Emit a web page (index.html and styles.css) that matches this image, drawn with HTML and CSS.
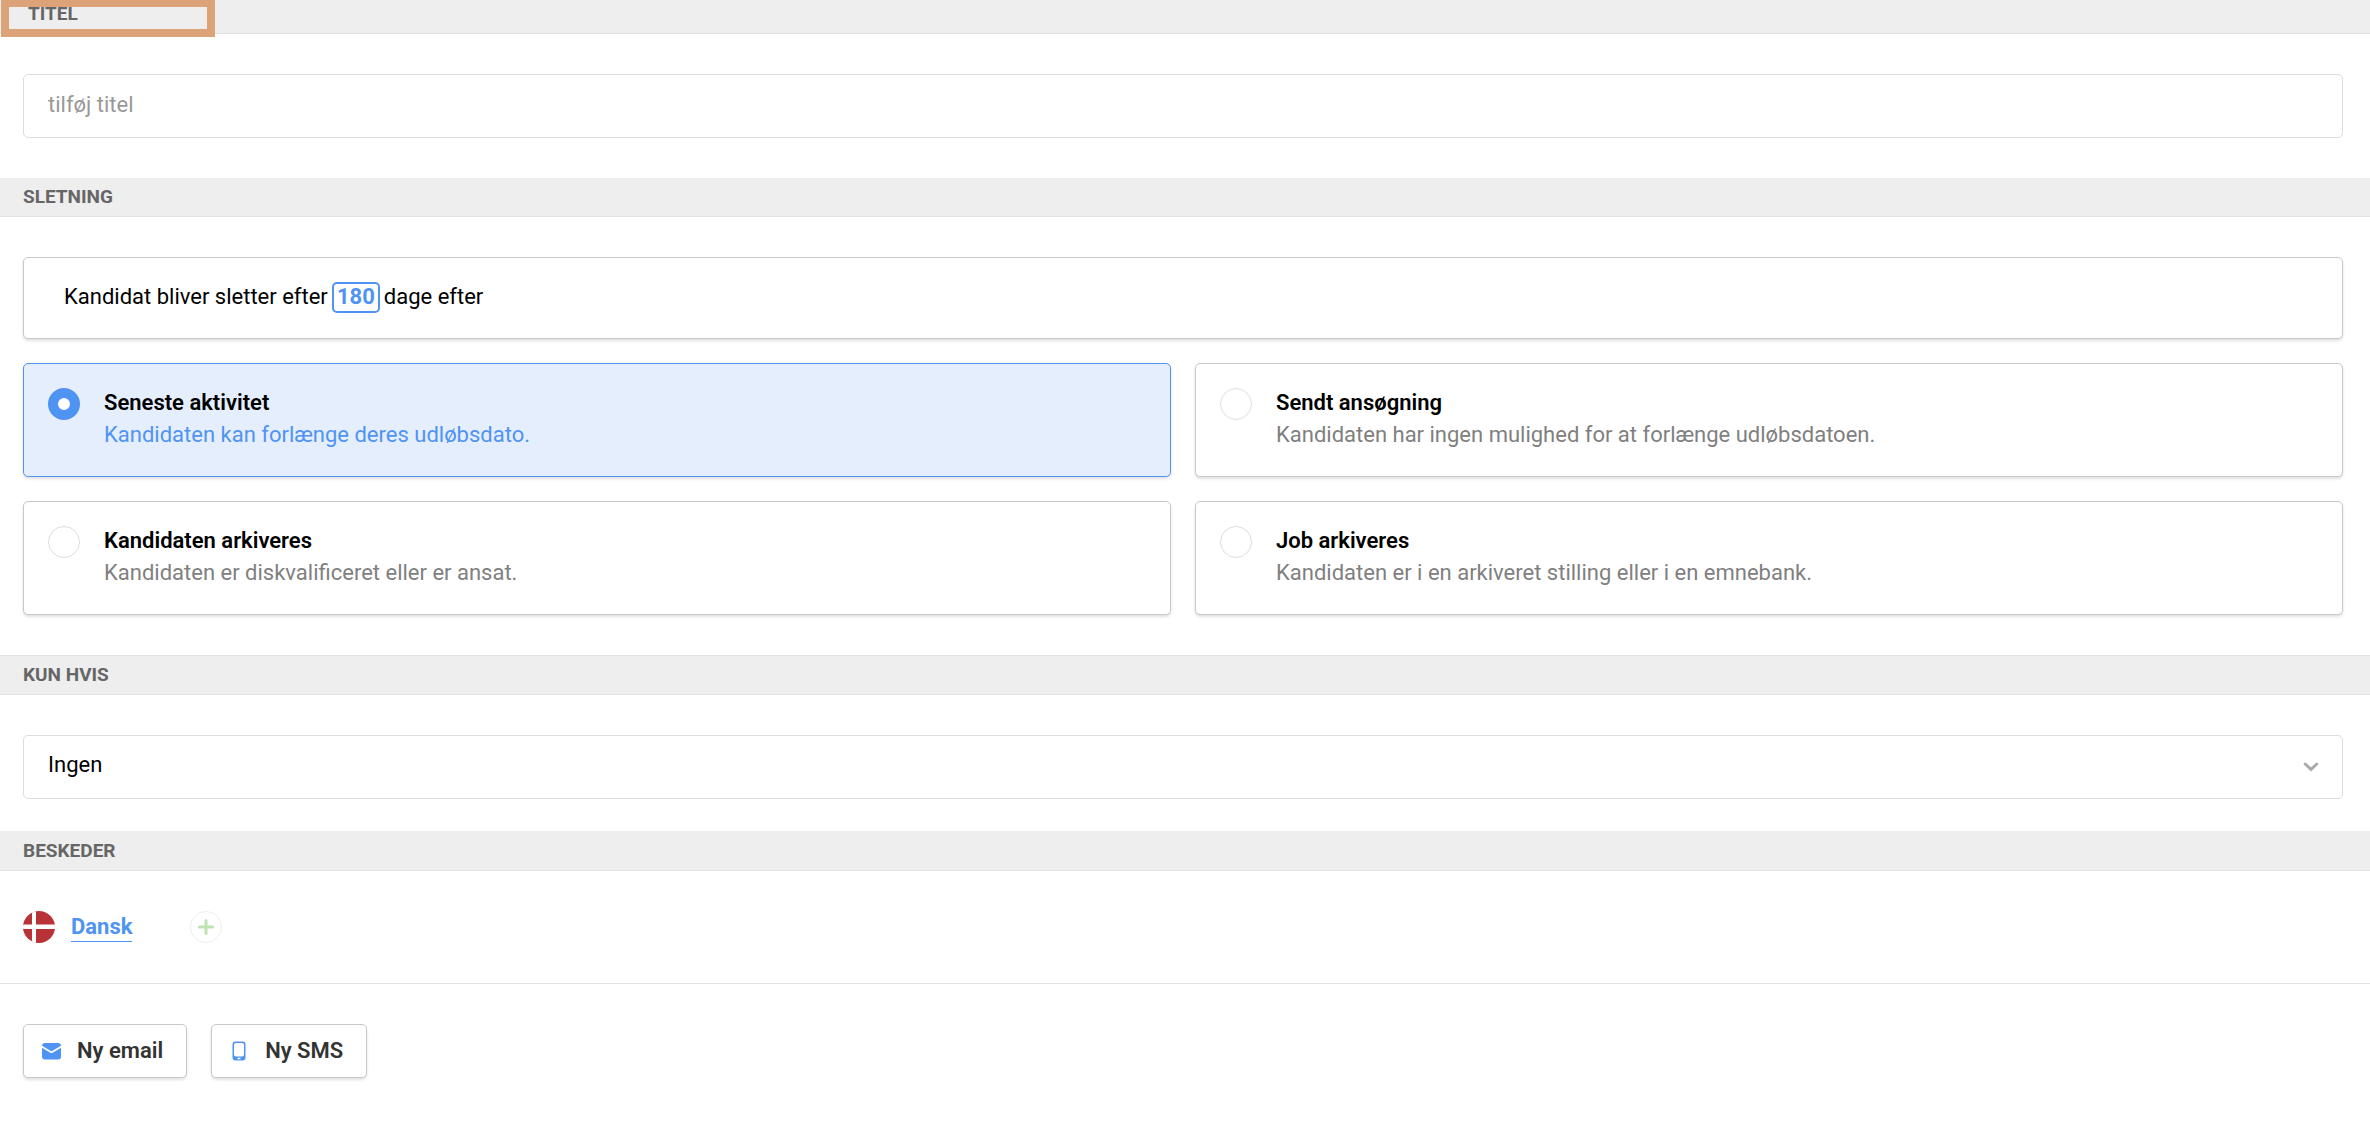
FILE: index.html
```html
<!DOCTYPE html>
<html lang="da">
<head>
<meta charset="utf-8">
<meta name="viewport" content="width=device-width, initial-scale=1">
<title>Sletning af kandidater</title>
<link rel="stylesheet" href="styles.css">
</head>
<body>
<form class="settings">
  <section class="section">
    <h2 class="section-title section-title--first"><label for="title">TITEL</label><span class="highlight"></span></h2>
    <div class="section-body">
      <input class="field" id="title" type="text" placeholder="tilføj titel">
    </div>
  </section>

  <section class="section">
    <h2 class="section-title">SLETNING</h2>
    <div class="section-body stack">
      <div class="card period">
        <label for="days">Kandidat bliver sletter efter</label>
        <input class="days" id="days" type="text" inputmode="numeric" value="180">
        <span>dage efter</span>
      </div>
      <div class="options">
        <label class="card option">
          <input class="radio" type="radio" name="trigger" checked>
          <span class="option-text"><strong class="option-name">Seneste aktivitet</strong><span class="option-note">Kandidaten kan forlænge deres udløbsdato.</span></span>
        </label>
        <label class="card option">
          <input class="radio" type="radio" name="trigger">
          <span class="option-text"><strong class="option-name">Sendt ansøgning</strong><span class="option-note">Kandidaten har ingen mulighed for at forlænge udløbsdatoen.</span></span>
        </label>
        <label class="card option">
          <input class="radio" type="radio" name="trigger">
          <span class="option-text"><strong class="option-name">Kandidaten arkiveres</strong><span class="option-note">Kandidaten er diskvalificeret eller er ansat.</span></span>
        </label>
        <label class="card option">
          <input class="radio" type="radio" name="trigger">
          <span class="option-text"><strong class="option-name">Job arkiveres</strong><span class="option-note">Kandidaten er i en arkiveret stilling eller i en emnebank.</span></span>
        </label>
      </div>
    </div>
  </section>

  <section class="section">
    <h2 class="section-title section-title--ruled"><label for="condition">KUN HVIS</label></h2>
    <div class="section-body section-body--short">
      <div class="select">
        <select class="field" id="condition"><option>Ingen</option></select>
        <svg class="chevron" viewBox="0 0 16 10" aria-hidden="true"><path d="M2.200 2L8 7.400L13.800 2"/></svg>
      </div>
    </div>
  </section>

  <section class="section">
    <h2 class="section-title section-title--plain">BESKEDER</h2>
    <div class="section-body languages">
      <svg class="flag" viewBox="0 0 32 32" aria-hidden="true">
        <clipPath id="disc"><circle cx="16" cy="16" r="16"/></clipPath>
        <g clip-path="url(#disc)">
          <rect width="32" height="32" fill="#b73338"/>
          <path d="M9 0h4v32H9zM0 13.500h32v4.500H0z" fill="#fff"/>
        </g>
      </svg>
      <a class="language" href="#dansk">Dansk</a>
      <button class="add" type="button" aria-label="Tilføj sprog">
        <svg class="plus" viewBox="0 0 16 16" aria-hidden="true"><path d="M8 1.500v13M1.500 8h13"/></svg>
      </button>
    </div>
    <div class="actions">
      <button class="button" type="button">
        <svg class="icon" viewBox="0 0 20 20" aria-hidden="true"><path fill="#4f93f3" d="M4 2h13a3 3 0 0 1 3 2.800L11.200 10q-.7.400-1.400 0L1 4.800A3 3 0 0 1 4 2zM1 6.700l8.400 5q1.100.6 2.200 0L20 6.700V15.500a3 3 0 0 1-3 3H4a3 3 0 0 1-3-3z"/></svg>
        Ny email
      </button>
      <button class="button" type="button">
        <svg class="icon" viewBox="0 0 20 20" aria-hidden="true"><path fill="#4f93f3" fill-rule="evenodd" d="M6.500.5h7a3 3 0 0 1 3 3v13a3 3 0 0 1-3 3h-7a3 3 0 0 1-3-3v-13a3 3 0 0 1 3-3zM7 2a2 2 0 0 0-2 2v9.500a2 2 0 0 0 2 2h6a2 2 0 0 0 2-2V4a2 2 0 0 0-2-2zM8.500 16.800v1.400h3v-1.400z"/></svg>
        Ny SMS
      </button>
    </div>
  </section>
</form>
</body>
</html>
```
FILE: styles.css
```css
*,
*::before,
*::after {
  box-sizing: border-box;
}

body {
  margin: 0;
  background: #fff;
  color: #000;
  font: 400 22px/32px Roboto, "Liberation Sans", sans-serif;
}

input,
select,
button {
  margin: 0;
  font: inherit;
  color: inherit;
}

.settings {
  overflow: hidden;
}

/* Section headings */

.section-title {
  margin: 0;
  padding: 0 23px;
  border-bottom: 1px solid #e2e2e2;
  background: #eee;
  color: #666;
  font-size: 19px;
  font-weight: 700;
  line-height: 38px;
}

.section-title--first {
  position: relative;
  margin-top: -5px;
  padding-left: 28px;
}

.section-title--ruled {
  border-top: 1px solid #e2e2e2;
}

.section-title--plain {
  border-top: 1px solid #eee;
}

.highlight {
  position: absolute;
  top: 4px;
  left: 1px;
  width: 214px;
  height: 38px;
  border: 8px solid #dba377;
}

.section-body {
  padding: 40px 27px 40px 23px;
}

.section-body--short {
  padding-bottom: 32px;
}

.stack {
  display: grid;
  gap: 24px;
}

/* Fields */

.field {
  display: block;
  width: 100%;
  height: 64px;
  padding: 0 24px 4px;
  border: 1px solid #ddd;
  border-radius: 5px;
  background: #fff;
}

.field::placeholder {
  color: #999;
  opacity: 1;
}

.select {
  position: relative;
}

.select .field {
  appearance: none;
}

.chevron {
  position: absolute;
  top: 27px;
  right: 24px;
  width: 16px;
  height: 10px;
  fill: none;
  stroke: #aaa;
  stroke-width: 3;
  stroke-linecap: round;
  pointer-events: none;
}

/* Cards */

.card {
  border: 1px solid #c8c8c8;
  border-radius: 5px;
  background: #fff;
  box-shadow: 0 2px 3px rgba(0, 0, 0, 0.12);
}

.period {
  display: flex;
  align-items: center;
  gap: 4px;
  min-height: 82px;
  padding: 22px 40px 24px;
}

.days {
  width: 48px;
  height: 31px;
  padding: 0;
  border: 2px solid #4f93f3;
  border-radius: 5px;
  background: #fff;
  color: #4f93f3;
  font-weight: 700;
  text-align: center;
}

.options {
  display: grid;
  grid-template-columns: 1fr 1fr;
  gap: 24px;
}

.option {
  display: flex;
  gap: 24px;
  padding: 23px 24px 25px;
}

.option:has(.radio:checked) {
  border-color: #4f93f3;
  background: #e5eefd;
}

.radio {
  flex: none;
  width: 32px;
  height: 32px;
  margin-top: 1px;
  border: 1px solid #ddd;
  border-radius: 50%;
  background: #fff;
  appearance: none;
}

.radio:checked {
  border: 10px solid #4f93f3;
}

.option-text {
  display: grid;
}

.option-name {
  font-weight: 600;
}

.option-note {
  color: #808080;
}

.radio:checked + .option-text .option-note {
  color: #4f93f3;
}

/* Messages */

.languages {
  display: flex;
  align-items: center;
  border-bottom: 1px solid #e2e2e2;
}

.flag {
  width: 32px;
  height: 32px;
}

.language {
  margin: 0 58px 0 16px;
  border-bottom: 1px solid #4f93f3;
  color: #4f93f3;
  font-weight: 700;
  line-height: 29px;
  text-decoration: none;
}

.add {
  display: grid;
  place-items: center;
  width: 32px;
  height: 32px;
  padding: 0;
  border: 1px solid #eee;
  border-radius: 50%;
  background: #fff;
}

.plus {
  width: 16px;
  height: 16px;
  fill: none;
  stroke: #bfe3b0;
  stroke-width: 3;
  stroke-linecap: round;
}

.actions {
  display: flex;
  gap: 24px;
  padding: 40px 23px;
}

.button {
  display: flex;
  align-items: center;
  gap: 16px;
  height: 54px;
  padding: 0 23px 0 17px;
  border: 1px solid #c8c8c8;
  border-radius: 5px;
  background: #fff;
  box-shadow: 0 2px 3px rgba(0, 0, 0, 0.12);
  color: #333;
  font-weight: 600;
}

.icon {
  width: 20px;
  height: 20px;
}
```
